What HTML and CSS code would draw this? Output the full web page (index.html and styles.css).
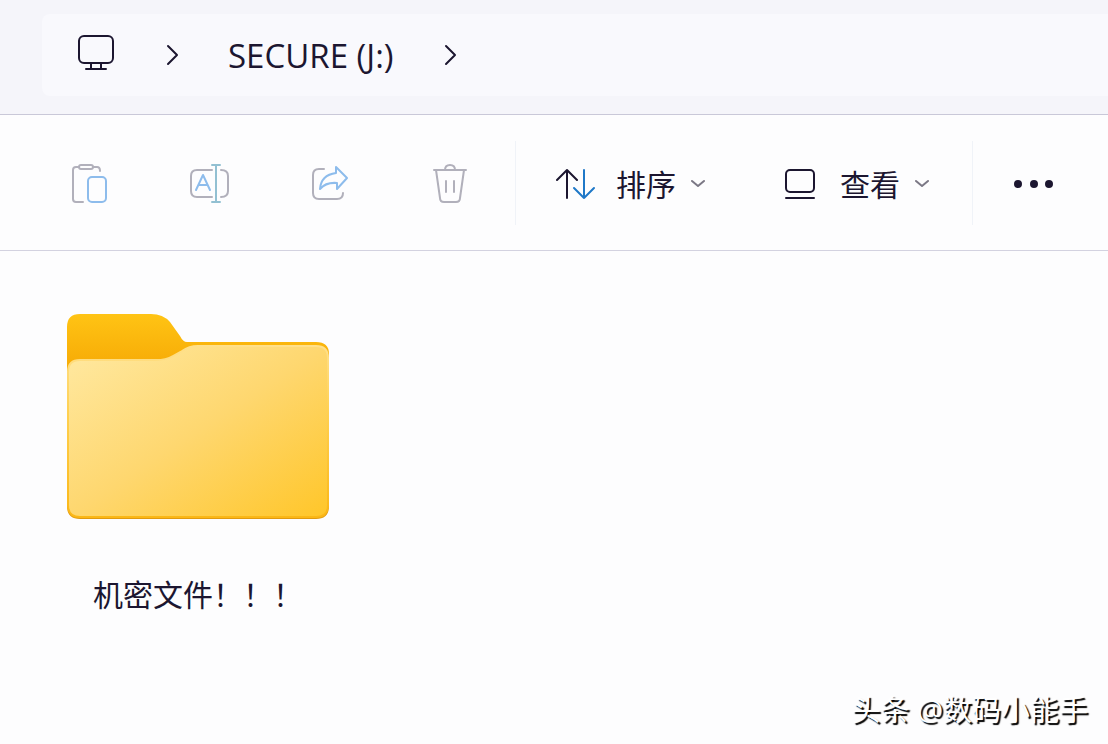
FILE: index.html
```html
<!DOCTYPE html>
<html lang="zh-CN">
<head>
    <meta charset="UTF-8">
    <meta name="viewport" content="width=device-width, initial-scale=1.0">
    <link rel="stylesheet" href="styles.css">
    <title>SECURE (J:)</title>
</head>
<body>
    <!-- Address bar -->
    <header class="header">
        <nav class="address">
            <a href="#" class="crumb" aria-label="PC">
                <svg width="40" height="40" viewBox="0 0 40 40">
                    <rect x="3" y="1" width="34" height="27" rx="5"/>
                    <path d="M15 28v5M25 28v5M10 34h20"/>
                </svg>
            </a>
            <svg class="arrow" width="16" height="24" viewBox="0 0 16 24"><path d="M4 3l9 9-9 9"/></svg>
            <a href="#" class="crumb">SECURE (J:)</a>
            <svg class="arrow" width="16" height="24" viewBox="0 0 16 24"><path d="M4 3l9 9-9 9"/></svg>
        </nav>
    </header>

    <!-- Toolbar -->
    <div class="toolbar">
        <div class="group">
            <button class="tool" aria-label="Paste">
                <svg width="40" height="40" viewBox="0 0 40 40">
                    <path d="M9 4H6q-3 0-3 3v29q0 3 3 3h7M23 4h4q3 0 3 4"/>
                    <rect x="9" y="2" width="14" height="4" rx="2"/>
                    <rect class="blue" x="18" y="14" width="18" height="25" rx="4"/>
                </svg>
            </button>
            <button class="tool" aria-label="Rename">
                <svg width="40" height="40" viewBox="0 0 40 40">
                    <path d="M22 7H7q-6 0-6 6v15q0 6 6 6h15M31 7q7 0 7 6v15q0 6-7 6"/>
                    <path class="blue" d="M6 27l7-15 7 15M9 22h8"/>
                    <path class="teal" d="M22 2h8M26 2v37M22 39h8"/>
                </svg>
            </button>
            <button class="tool" aria-label="Share">
                <svg width="40" height="40" viewBox="0 0 40 40">
                    <path d="M14 6H9q-6 0-6 6v18q0 6 6 6h18q6 0 6-6"/>
                    <path class="blue" d="M26 4l11 11-10 11v-6q-11-1-17 6 1-14 16-16z"/>
                </svg>
            </button>
            <button class="tool" aria-label="Delete">
                <svg width="40" height="40" viewBox="0 0 40 40">
                    <path d="M4 7h32M6 7l4 28q0 4 4 4h12q4 0 4-4l4-28M15 7q0-5 5-5t5 5M16 18v11M24 18v11"/>
                </svg>
            </button>
        </div>
        <div class="group">
            <button class="menu">
                <svg width="40" height="40" viewBox="0 0 40 40">
                    <path d="M11 35V7M1 17L11 7l10 10"/>
                    <path class="down" d="M28 7v28M18 25l10 10 10-10"/>
                </svg>
                <span class="label">排序</span>
                <svg class="chevron" width="14" height="10" viewBox="0 0 14 10"><path d="M1 3l6 5 6-5"/></svg>
            </button>
            <button class="menu">
                <svg width="40" height="40" viewBox="0 0 40 40">
                    <rect x="6" y="7" width="28" height="22" rx="4"/>
                    <path d="M6 35h28"/>
                </svg>
                <span class="label">查看</span>
                <svg class="chevron" width="14" height="10" viewBox="0 0 14 10"><path d="M1 3l6 5 6-5"/></svg>
            </button>
        </div>
        <button class="tool more" aria-label="More">
            <svg width="40" height="40" viewBox="0 0 40 40">
                <circle cx="5" cy="21" r="3"/><circle cx="21" cy="21" r="3"/><circle cx="36" cy="21" r="3"/>
            </svg>
        </button>
    </div>

    <!-- Files -->
    <main class="files">
        <a href="#" class="file">
            <svg width="264" height="208" viewBox="0 0 264 208">
                <defs>
                    <linearGradient id="back" x1="0" y1="0" x2="0" y2="1">
                        <stop offset="0" stop-color="#ffc414"/>
                        <stop offset="0.22" stop-color="#f8ae08"/>
                        <stop offset="1" stop-color="#e09a10"/>
                    </linearGradient>
                    <linearGradient id="front" x1="0" y1="0" x2="1" y2="1">
                        <stop offset="0" stop-color="#ffe9a2"/>
                        <stop offset="0.5" stop-color="#fed76f"/>
                        <stop offset="1" stop-color="#ffc629"/>
                    </linearGradient>
                    <linearGradient id="edge" x1="0" y1="0" x2="0" y2="1">
                        <stop offset="0" stop-color="#ffe08a"/>
                        <stop offset="0.4" stop-color="#ffd050"/>
                        <stop offset="1" stop-color="#fbb716"/>
                    </linearGradient>
                </defs>
                <path fill="url(#back)" d="M1 14Q1 1 14 1h71q12 0 19 8l10 14q3 6 7 6h129q13 0 13 12v152q0 13-13 13H14q-13 0-13-13z"/>
                <path fill="url(#front)" stroke="url(#edge)" stroke-width="2" d="M2 59q0-12 12-12h76q10 0 17-4l9-5q7-5 16-5h118q12 0 12 12v147q0 12-12 12H14q-12 0-12-12z"/>
            </svg>
            <span>机密文件！！！</span>
        </a>
    </main>

    <div class="watermark">头条 @数码小能手</div>
</body>
</html>
```
FILE: styles.css
```css
body {
    margin: 0;
    min-height: 100vh;
    background-color: #fdfdfe;
    color: #1c1630;
    font-family: "Open Sans", "Noto Sans CJK SC", sans-serif;
    font-size: 30px;
}
svg {
    display: block;
    fill: none;
    stroke: #1c1630;
    stroke-width: 2;
    stroke-linecap: round;
    stroke-linejoin: round;
}
a {
    color: inherit;
    text-decoration: none;
}
button {
    padding: 0;
    border: none;
    background: none;
    color: inherit;
    font: inherit;
    cursor: pointer;
}

/* Address bar */
.header {
    padding: 14px 0 18px 42px;
    background-color: #f5f5fa;
    border-bottom: 1px solid #c9c8d8;
}
.address {
    display: flex;
    align-items: center;
    height: 82px;
    padding-left: 34px;
    gap: 48px;
    background-color: #f9f9fd;
    border-radius: 8px 0 0 8px;
}
.crumb {
    font-size: 33px;
}

/* Toolbar */
.toolbar {
    display: flex;
    align-items: center;
    height: 135px;
    border-bottom: 1px solid #d3d2e0;
}
.group {
    display: flex;
    align-items: center;
    height: 84px;
    padding-right: 8px;
    border-right: 1px solid #f0f3f8;
}
.group:first-child {
    padding: 0 5px 0 30px;
}
.tool {
    display: flex;
    justify-content: center;
    width: 120px;
}
.tool svg {
    stroke: #b1b0bb;
}
.tool .blue {
    stroke: #8dbcec;
}
.tool .teal {
    stroke: #92c0d2;
}
.more svg {
    fill: #1c1630;
    stroke: #1c1630;
}
.menu {
    display: flex;
    align-items: center;
    padding: 0 35px 0 40px;
}
.menu .label {
    padding: 0 15px 0 20px;
}
.menu .down {
    stroke: #1f78c8;
}
.menu .chevron {
    stroke: #7b7885;
}

/* Files */
.files {
    display: flex;
    flex-wrap: wrap;
    padding: 62px 66px;
}
.file {
    display: flex;
    flex-direction: column;
    align-items: center;
    gap: 50px;
}
.file svg {
    stroke: none;
}

.watermark {
    position: absolute;
    right: 20px;
    bottom: 15px;
    color: #ffffff;
    font-size: 29px;
    text-shadow: 2px 2px 1px #000000;
}
```
